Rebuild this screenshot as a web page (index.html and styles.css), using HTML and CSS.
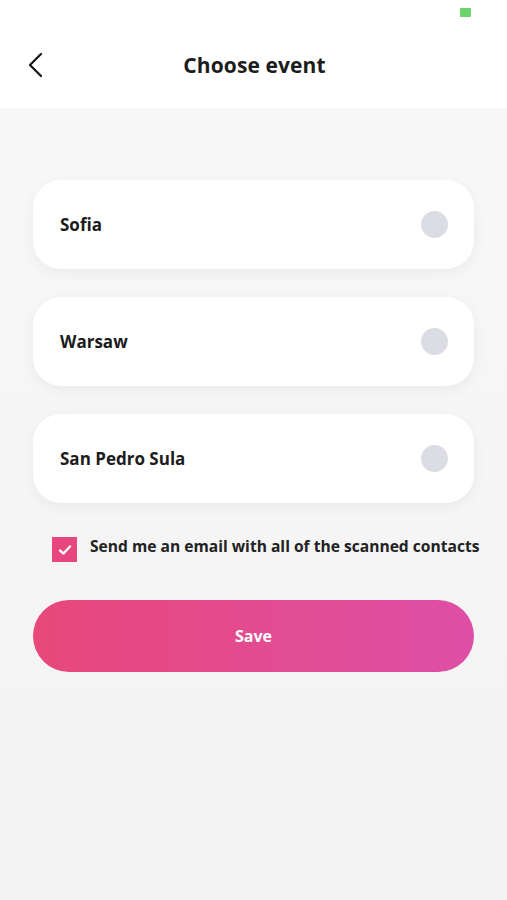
FILE: index.html
```html
<!DOCTYPE html>
<html lang="en">

<head>
    <meta charset="UTF-8">
    <meta name="viewport" content="width=device-width, initial-scale=1.0">
    <title>Choose event</title>
    <link rel="stylesheet" href="styles.css">
</head>

<body>
    <div class="top">
        <div class="status">
            <span class="battery"></span>
        </div>
        <div class="header">
            <button class="back">
                <svg width="18" height="26" viewBox="0 0 18 26">
                    <path d="M15 2 L4 13 L15 24" fill="none" stroke="#111" stroke-width="2.2" stroke-linecap="round" stroke-linejoin="round" />
                </svg>
            </button>
            <h1>Choose event</h1>
            <span></span>
        </div>
    </div>

    <div class="content">
        <div class="events">
            <label class="event">
                <span class="name">Sofia</span>
                <span class="radio"></span>
            </label>
            <label class="event">
                <span class="name">Warsaw</span>
                <span class="radio"></span>
            </label>
            <label class="event">
                <span class="name">San Pedro Sula</span>
                <span class="radio"></span>
            </label>
        </div>

        <label class="check">
            <span class="box">
                <svg width="14" height="12" viewBox="0 0 14 12">
                    <path d="M2 6.5 L5.5 9.5 L12 2.5" fill="none" stroke="#fff" stroke-width="2.4" stroke-linecap="round" stroke-linejoin="round" />
                </svg>
            </span>
            <span class="check-text">Send me an email with all of the scanned contacts</span>
        </label>

        <button class="save">Save</button>
    </div>
</body>

</html>
```

FILE: styles.css
```css
* {
    box-sizing: border-box;
}

body {
    margin: 0;
    height: 900px;
    font-family: "Open Sans", "Noto Sans", sans-serif;
    color: #1c1c1c;
    background: linear-gradient(#f8f8f8, #f3f3f3);
    display: flex;
    flex-direction: column;
}

.top {
    background: #fff;
    height: 108px;
}

.status {
    height: 24px;
    display: flex;
    justify-content: flex-end;
    padding: 8px 36px 0 0;
}

.battery {
    width: 11px;
    height: 9px;
    border-radius: 1px;
    background: #6ad36a;
}

.header {
    height: 84px;
    display: grid;
    grid-template-columns: 1fr auto 1fr;
    align-items: center;
    padding: 0 24px 0 26px;
}

.header h1 {
    margin-top: -2px;
}

.back {
    justify-self: start;
    border: 0;
    background: none;
    padding: 0;
    height: 26px;
    margin-top: -2px;
}

h1 {
    margin: 0;
    font-size: 21px;
    font-weight: 700;
    letter-spacing: 0.1px;
}

.content {
    padding: 72px 33px 0 33px;
}

.events {
    display: flex;
    flex-direction: column;
    gap: 28px;
}

.event {
    height: 89px;
    border-radius: 28px;
    background: #fff;
    box-shadow: 0 4px 14px rgba(0, 0, 0, 0.05);
    display: flex;
    align-items: center;
    justify-content: space-between;
    padding: 0 26px 0 27px;
}

.name {
    font-size: 17px;
    font-weight: 700;
}

.radio {
    width: 27px;
    height: 27px;
    border-radius: 50%;
    background: #dcdde4;
}

.check {
    display: flex;
    align-items: flex-start;
    gap: 13px;
    margin: 34px 0 0 19px;
}

.box {
    width: 25px;
    height: 25px;
    background: #e8467e;
    display: flex;
    align-items: center;
    justify-content: center;
    flex-shrink: 0;
}

.check-text {
    font-size: 15.6px;
    font-weight: 700;
    white-space: nowrap;
    color: #222;
    margin-top: -2px;
}

.save {
    display: block;
    width: 441px;
    height: 72px;
    margin-top: 38px;
    border: 0;
    border-radius: 36px;
    background: linear-gradient(90deg, #e8487a, #dd4fa6);
    color: #fff;
    font-family: "Open Sans", "Noto Sans", sans-serif;
    font-size: 16px;
    font-weight: 700;
}
```
